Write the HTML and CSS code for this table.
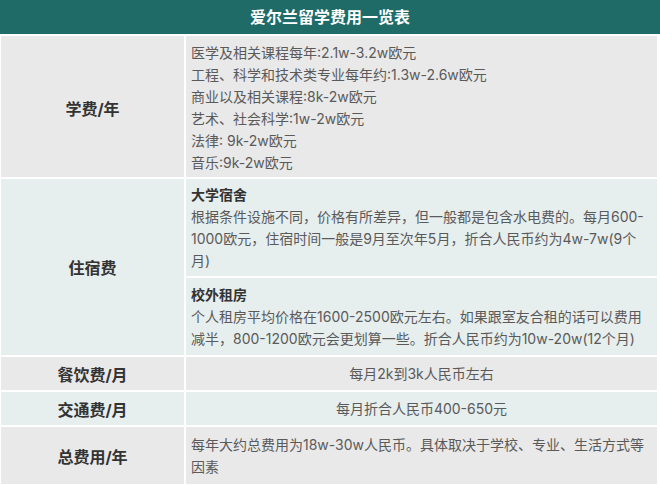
FILE: index.html
```html
<!DOCTYPE html>
<html lang="zh-CN">
<head>
<meta charset="utf-8">
<title>爱尔兰留学费用一览表</title>
<link rel="stylesheet" href="styles.css">
</head>
<body>
<div class="page">
  <div class="title">爱尔兰留学费用一览表</div>
  <div class="grid">
    <div class="label gray r1">学费/年</div>
    <div class="cell gray r1">
      医学及相关课程每年:2.1w-3.2w欧元<br>
      工程、科学和技术类专业每年约:1.3w-2.6w欧元<br>
      商业以及相关课程:8k-2w欧元<br>
      艺术、社会科学:1w-2w欧元<br>
      法律: 9k-2w欧元<br>
      音乐:9k-2w欧元
    </div>

    <div class="label blue r2">住宿费</div>
    <div class="cell blue r2a">
      <div class="sub">大学宿舍</div>
      根据条件设施不同，价格有所差异，但一般都是包含水电费的。每月600-<br>
      1000欧元，住宿时间一般是9月至次年5月，折合人民币约为4w-7w(9个<br>
      月)
    </div>
    <div class="cell blue r2b">
      <div class="sub">校外租房</div>
      个人租房平均价格在1600-2500欧元左右。如果跟室友合租的话可以费用<br>
      减半，800-1200欧元会更划算一些。折合人民币约为10w-20w(12个月)
    </div>

    <div class="label gray">餐饮费/月</div>
    <div class="cell gray center">每月2k到3k人民币左右</div>

    <div class="label blue">交通费/月</div>
    <div class="cell blue center">每月折合人民币400-650元</div>

    <div class="label gray">总费用/年</div>
    <div class="cell gray r5">
      每年大约总费用为18w-30w人民币。具体取决于学校、专业、生活方式等<br>
      因素
    </div>
  </div>
</div>
</body>
</html>
```

FILE: styles.css
```css
html, body {
  margin: 0;
  padding: 0;
  background: #ffffff;
}

body {
  font-family: Inter, "Noto Sans CJK SC", sans-serif;
  color: #5a5a5a;
}

.page {
  width: 660px;
}

.title {
  height: 34px;
  background: #1e6b68;
  color: #ffffff;
  font-size: 16px;
  font-weight: bold;
  line-height: 34px;
  text-align: center;
  margin-bottom: 2px;
}

.grid {
  display: grid;
  grid-template-columns: 183px 471px;
  column-gap: 2px;
  row-gap: 2px;
  margin-left: 1px;
}

.gray {
  background: #e9e9e9;
}

.blue {
  background: #e6eeee;
}

.label {
  display: flex;
  align-items: center;
  justify-content: center;
  font-size: 16px;
  font-weight: bold;
  color: #333333;
}

.r2 {
  grid-row: span 2;
}

.cell {
  font-size: 14px;
  line-height: 22px;
  padding: 6px 5px 5px 5px;
  white-space: nowrap;
}

.r1 {
  padding-top: 6px;
  padding-bottom: 3px;
}

.r2a {
  padding-top: 5px;
  padding-bottom: 4px;
}

.r2b {
  padding-top: 6px;
  padding-bottom: 5px;
}

.sub {
  font-weight: bold;
  color: #333333;
}

.center {
  text-align: center;
}

.r5 {
  padding-top: 7px;
  padding-bottom: 6px;
}
```
